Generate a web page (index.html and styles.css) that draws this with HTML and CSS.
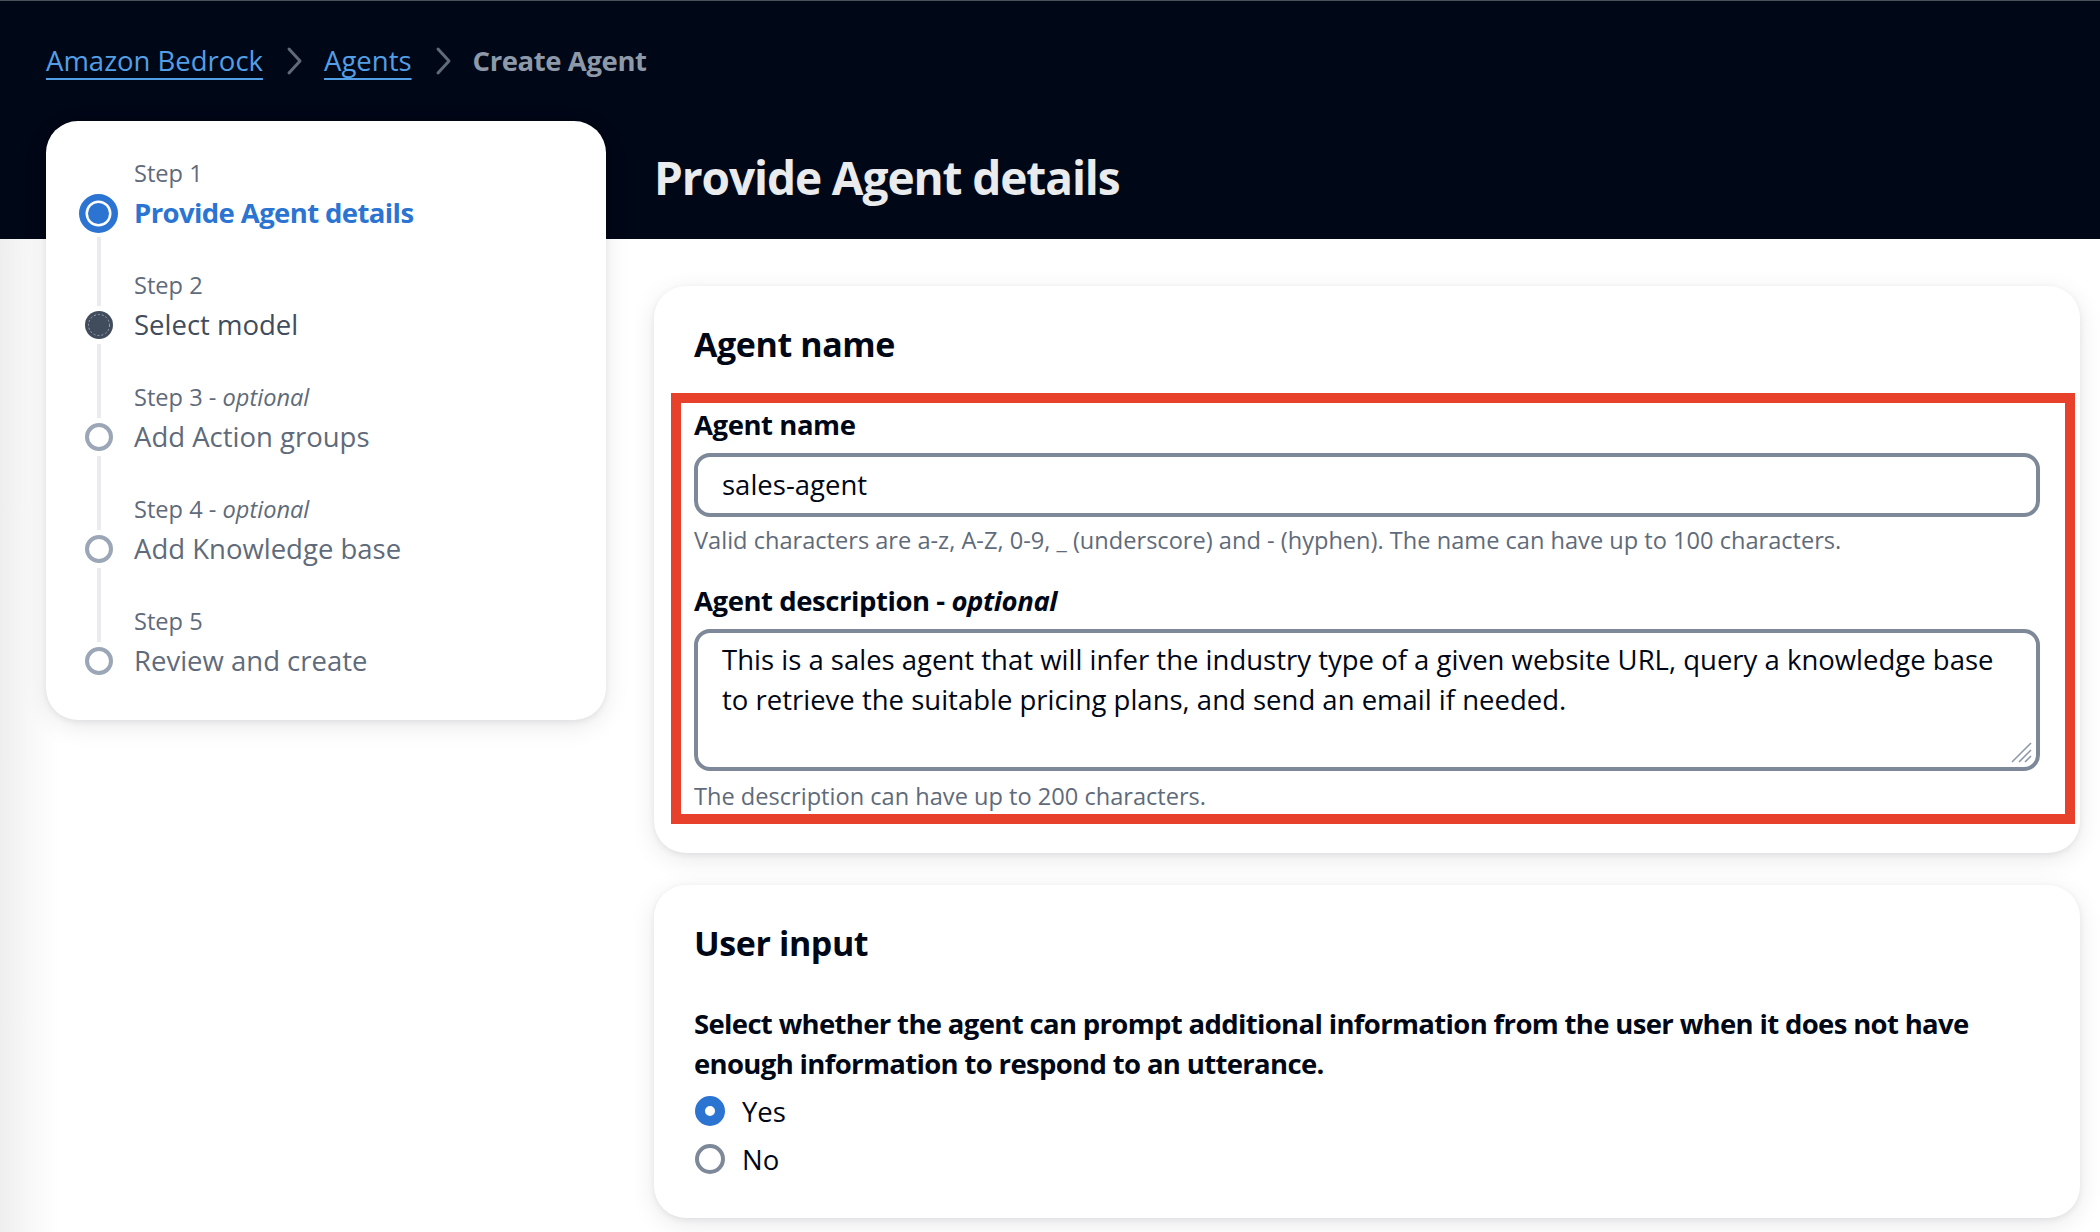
FILE: index.html
```html
<!DOCTYPE html>
<html lang="en">
<head>
<meta charset="utf-8">
<title>Create Agent - Amazon Bedrock</title>
<link rel="stylesheet" href="styles.css">
</head>
<body>
<div class="page">
  <nav class="breadcrumbs" aria-label="Breadcrumbs">
    <a class="crumb-link" href="#">Amazon Bedrock</a>
    <svg class="chevron" width="18" height="30" viewBox="0 0 18 30" aria-hidden="true"><path d="M4 3 L15 15 L4 27" fill="none" stroke="#5f6b7a" stroke-width="3" stroke-linecap="round" stroke-linejoin="round"/></svg>
    <a class="crumb-link" href="#">Agents</a>
    <svg class="chevron" width="18" height="30" viewBox="0 0 18 30" aria-hidden="true"><path d="M4 3 L15 15 L4 27" fill="none" stroke="#5f6b7a" stroke-width="3" stroke-linecap="round" stroke-linejoin="round"/></svg>
    <span class="crumb-current">Create Agent</span>
  </nav>

  <div class="layout">
    <aside class="wizard-nav">
      <ol class="steps">
        <li class="step step--first">
          <span class="rail"></span>
          <span class="step-label">Step 1</span>
          <span class="marker"><svg width="39" height="39" viewBox="0 0 39 39"><circle cx="19.5" cy="19.5" r="16.25" fill="#fff" stroke="#2b74d2" stroke-width="6.5"/><circle cx="19.5" cy="19.5" r="10.5" fill="#2b74d2"/></svg></span>
          <span class="step-title step-title--active">Provide Agent details</span>
          <span class="rail"></span>
        </li>
        <li class="step">
          <span class="rail"></span>
          <span class="step-label">Step 2</span>
          <span class="marker"><svg width="28" height="28" viewBox="0 0 28 28"><circle cx="14" cy="14" r="14" fill="#414d5c"/><circle cx="14" cy="14" r="10.5" fill="none" stroke="#9aa5b3" stroke-width="1" stroke-dasharray="2 2"/></svg></span>
          <span class="step-title step-title--next">Select model</span>
          <span class="rail"></span>
        </li>
        <li class="step">
          <span class="rail"></span>
          <span class="step-label">Step 3 - <i>optional</i></span>
          <span class="marker"><svg width="28" height="28" viewBox="0 0 28 28"><circle cx="14" cy="14" r="12" fill="#fff" stroke="#9ba7b6" stroke-width="4"/></svg></span>
          <span class="step-title">Add Action groups</span>
          <span class="rail"></span>
        </li>
        <li class="step">
          <span class="rail"></span>
          <span class="step-label">Step 4 - <i>optional</i></span>
          <span class="marker"><svg width="28" height="28" viewBox="0 0 28 28"><circle cx="14" cy="14" r="12" fill="#fff" stroke="#9ba7b6" stroke-width="4"/></svg></span>
          <span class="step-title">Add Knowledge base</span>
          <span class="rail"></span>
        </li>
        <li class="step step--last">
          <span class="rail"></span>
          <span class="step-label">Step 5</span>
          <span class="marker"><svg width="28" height="28" viewBox="0 0 28 28"><circle cx="14" cy="14" r="12" fill="#fff" stroke="#9ba7b6" stroke-width="4"/></svg></span>
          <span class="step-title">Review and create</span>
        </li>
      </ol>
    </aside>

    <main class="content">
      <h1 class="page-title">Provide Agent details</h1>

      <section class="card">
        <h2 class="card-title">Agent name</h2>
        <div class="highlight">
          <label class="field-label">Agent name</label>
          <div class="input">sales-agent</div>
          <p class="hint">Valid characters are a-z, A-Z, 0-9, _ (underscore) and - (hyphen). The name can have up to 100 characters.</p>
          <label class="field-label field-label--spaced">Agent description - <i>optional</i></label>
          <div class="textarea">This is a sales agent that will infer the industry type of a given website URL, query a knowledge base to retrieve the suitable pricing plans, and send an email if needed.<svg class="grabber" width="26" height="26" viewBox="0 0 26 26" aria-hidden="true"><path d="M24 5 L5 24 M24 12 L12 24 M24 18 L18 24" stroke="#8d99a8" stroke-width="1.6" fill="none"/></svg></div>
          <p class="hint hint--last">The description can have up to 200 characters.</p>
        </div>
      </section>

      <section class="card card--second">
        <h2 class="card-title">User input</h2>
        <p class="question">Select whether the agent can prompt additional information from the user when it does not have enough information to respond to an utterance.</p>
        <div class="radios">
          <div class="radio-row"><span class="radio radio--checked"></span><span>Yes</span></div>
          <div class="radio-row"><span class="radio"></span><span>No</span></div>
        </div>
      </section>
    </main>
  </div>
</div>
</body>
</html>
```

FILE: styles.css
```css
* {
  box-sizing: border-box;
  margin: 0;
  padding: 0;
}

html, body {
  margin: 0;
  background: #ffffff;
}

body {
  font-family: "Open Sans", "Noto Sans", "Liberation Sans", sans-serif;
  color: #000716;
}

.page {
  height: 1232px;
  overflow: hidden;
  border-top: 1px solid #4a515c;
  background:
    linear-gradient(#000716, #000716) top left / 100% 238px no-repeat,
    linear-gradient(to right, #eeeeee 0, #f8f8f8 30px, #ffffff 58px);
}

/* Breadcrumbs */
.breadcrumbs {
  display: flex;
  align-items: center;
  height: 120px;
  padding: 40px 46px 40px;
  font-size: 27.5px;
  line-height: 40px;
}

.crumb-link {
  color: #539fe5;
  text-decoration: underline;
  text-decoration-thickness: 2px;
  text-underline-offset: 7px;
}

.chevron {
  display: block;
  margin: 0 21px 0 22px;
}

.crumb-current {
  color: #8d99a8;
  font-weight: 700;
  letter-spacing: -0.015em;
}

/* Layout */
.layout {
  display: grid;
  grid-template-columns: 560px 1fr;
  column-gap: 48px;
  padding: 0 20px 0 46px;
  align-items: start;
}

/* Wizard navigation */
.wizard-nav {
  background: #ffffff;
  border-radius: 32px;
  box-shadow: 0 2px 6px rgba(0, 7, 22, 0.07), 0 6px 26px rgba(0, 7, 22, 0.09);
  padding: 36px 33px 35px;
}

.steps {
  list-style: none;
}

.step {
  display: grid;
  grid-template-columns: 39px 1fr;
  grid-template-rows: 32px 48px 32px;
  column-gap: 16px;
}

.step--last {
  grid-template-rows: 32px 48px;
}

.rail {
  justify-self: center;
  width: 4px;
  background: #e9ebed;
}

.step--first > .rail:first-child {
  visibility: hidden;
}

.marker {
  display: flex;
  flex-direction: column;
  align-items: center;
  justify-content: center;
}

.marker::before,
.marker::after {
  content: "";
  flex: 1;
  width: 4px;
  background: #e9ebed;
}

.marker::before {
  margin-bottom: 5px;
}

.marker::after {
  margin-top: 5px;
}

.marker svg {
  display: block;
  flex: none;
}

.step--first .marker::before,
.step--last .marker::after {
  visibility: hidden;
}

.step-label {
  font-size: 23.6px;
  line-height: 32px;
  color: #5f6b7a;
  white-space: nowrap;
}

.step-title {
  font-size: 27.5px;
  line-height: 48px;
  color: #5f6b7a;
  white-space: nowrap;
}

.step-title--active {
  color: #2b74d2;
  font-weight: 700;
  letter-spacing: -0.022em;
}

.step-title--next {
  color: #414d5c;
}

/* Main content */
.content {
  padding-top: 27px;
  min-width: 0;
}

.page-title {
  font-size: 46px;
  line-height: 58px;
  font-weight: 700;
  letter-spacing: -0.024em;
  color: #e9ebed;
  margin-bottom: 80px;
}

.card {
  background: #ffffff;
  border-radius: 32px;
  box-shadow: 0 2px 6px rgba(0, 7, 22, 0.07), 0 6px 26px rgba(0, 7, 22, 0.09);
  padding: 36px 40px 29px;
}

.card--second {
  margin-top: 32px;
  padding-bottom: 35px;
}

.card-title {
  font-size: 34px;
  line-height: 44px;
  font-weight: 700;
  letter-spacing: -0.012em;
  color: #000716;
}

.highlight {
  margin: 27px -35px 0 -23px;
  border: 10px solid #e8412b;
  padding: 3px 25px 2px 13px;
}

.field-label {
  display: block;
  font-size: 27.5px;
  line-height: 38px;
  font-weight: 700;
  letter-spacing: -0.016em;
  margin-bottom: 9px;
}

.field-label--spaced {
  margin-top: 26px;
}

.input {
  height: 64px;
  border: 4px solid #7d8998;
  border-radius: 16px;
  padding: 0 24px;
  font-size: 27.5px;
  line-height: 56px;
  color: #000716;
}

.hint {
  font-size: 23.6px;
  line-height: 32px;
  color: #5f6b7a;
  margin-top: 7px;
}

.hint--last {
  margin-top: 9px;
}

.textarea {
  position: relative;
  height: 142px;
  border: 4px solid #7d8998;
  border-radius: 16px;
  padding: 7px 24px;
  font-size: 27.5px;
  line-height: 40px;
  color: #000716;
}

.grabber {
  position: absolute;
  right: 3px;
  bottom: 3px;
}

.question {
  margin-top: 39px;
  font-size: 27.5px;
  line-height: 40px;
  font-weight: 700;
  letter-spacing: -0.024em;
  color: #000716;
}

.radios {
  margin-top: 3px;
}

.radio-row {
  display: flex;
  align-items: center;
  height: 48px;
  gap: 17px;
  font-size: 27.5px;
  color: #000716;
}

.radio {
  display: block;
  width: 30px;
  height: 30px;
  margin-left: 1px;
  border-radius: 50%;
  border: 4px solid #7d8998;
  background: #ffffff;
}

.radio--checked {
  border: 10px solid #2b74d2;
}
```
